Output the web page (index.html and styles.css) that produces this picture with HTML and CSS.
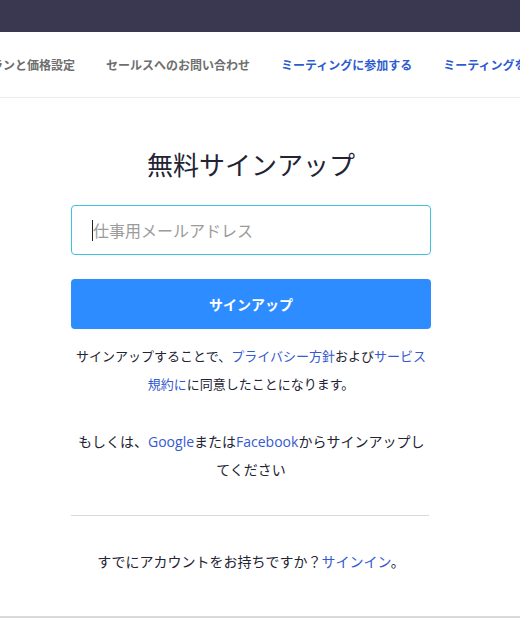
FILE: index.html
```html
<!DOCTYPE html>
<html lang="ja">
<head>
<meta charset="utf-8">
<title>無料サインアップ</title>
<link rel="stylesheet" href="styles.css">
</head>
<body>
<div class="topbar"></div>
<nav class="nav">
  <a class="nav-item gray first" href="#">プランと価格設定</a>
  <a class="nav-item gray" href="#">セールスへのお問い合わせ</a>
  <a class="nav-item blue" href="#">ミーティングに参加する</a>
  <a class="nav-item blue" href="#">ミーティングを開催する</a>
</nav>
<main class="main">
  <div class="form">
    <h1 class="title">無料サインアップ</h1>
    <div class="input"><span class="caret"></span><span class="placeholder">仕事用メールアドレス</span></div>
    <button class="btn">サインアップ</button>
    <p class="text terms">サインアップすることで、<a href="#">プライバシー方針</a>および<a href="#">サービス規約に</a>に同意したことになります。</p>
    <p class="text social">もしくは、<a href="#">Google</a>または<a href="#">Facebook</a>からサインアップし<span class="keep">てください</span></p>
    <hr class="divider">
    <p class="text signin">すでにアカウントをお持ちですか？<a href="#">サインイン</a>。</p>
  </div>
</main>
</body>
</html>
```
FILE: styles.css
```css
html, body {
  margin: 0;
  padding: 0;
  background: #fff;
  overflow: hidden;
}
body {
  font-family: Lato, "Noto Sans CJK JP", sans-serif;
  color: #232333;
}
.topbar {
  height: 32px;
  background: #3a3751;
}
.nav {
  height: 65px;
  display: flex;
  align-items: center;
  gap: 31px;
  border-bottom: 1px solid #ececec;
  white-space: nowrap;
  overflow: hidden;
}
.nav-item {
  font-size: 12px;
  font-weight: 700;
  text-decoration: none;
  flex: none;
}
.nav-item.first {
  margin-left: -21px;
}
.gray { color: #6e6e6e; }
.blue { color: #2e5bd0; }
.main {
  height: 520px;
  border-bottom: 2px solid #d9d9d9;
  box-sizing: border-box;
}
.form {
  width: 360px;
  margin-left: 71px;
  display: flex;
  flex-direction: column;
  text-align: center;
}
.title {
  margin: 49px 0 0;
  font-size: 26px;
  line-height: 36px;
  font-weight: 400;
  color: #232333;
}
.input {
  margin-top: 22px;
  height: 50px;
  box-sizing: border-box;
  border: 1px solid #3ec3df;
  border-radius: 4px;
  display: flex;
  align-items: center;
  padding-left: 20px;
  text-align: left;
}
.caret {
  width: 1px;
  height: 21px;
  background: #222;
}
.placeholder {
  font-family: "Noto Sans CJK JP", sans-serif;
  font-size: 16px;
  color: #9b9b9b;
}
.btn {
  margin-top: 24px;
  height: 50px;
  border: 0;
  border-radius: 4px;
  background: #2d8cff;
  color: #fff;
  font-family: inherit;
  font-size: 14px;
  font-weight: 700;
}
.text {
  margin: 0;
  font-family: "Open Sans", "Noto Sans CJK JP", sans-serif;
  font-size: 13px;
  line-height: 28px;
  color: #232333;
}
.text a {
  color: #3559d2;
  text-decoration: none;
}
.terms { margin-top: 13px; }
.social {
  margin-top: 30px;
  font-size: 14px;
}
.keep { white-space: nowrap; }
.divider {
  margin: 31px 0 0;
  border: 0;
  border-top: 1px solid #d8d8d8;
  width: 358px;
}
.signin {
  margin-top: 32px;
  font-size: 14px;
}
```
